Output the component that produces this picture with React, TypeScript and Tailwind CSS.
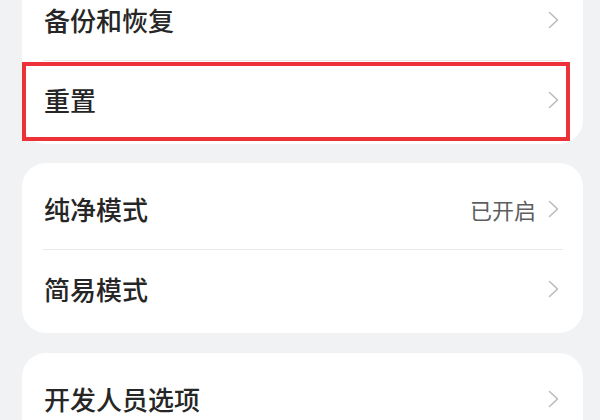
const FONT = 'font-["Noto_Sans_CJK_SC","Noto_Sans",sans-serif]';

function Chevron() {
  return (
    <svg width="11" height="18" viewBox="0 0 11 18" fill="none" className="shrink-0">
      <path d="M1.5 1.5 L9.5 9 L1.5 16.5" stroke="#bcbcbc" strokeWidth="1.6" strokeLinecap="round" strokeLinejoin="round" />
    </svg>
  );
}

interface RowProps {
  label: string;
  value?: string;
  divider?: boolean;
  highlight?: boolean;
}

function Row({ label, value, divider, highlight }: RowProps) {
  return (
    <div className="relative">
      {divider && <div className="absolute top-0 left-[21px] right-[20px] h-px bg-[#e8e8ea]" />}
      <div className="h-[80px] flex items-center justify-between pl-[22px] pr-[24px]">
        <span className="text-[26px] font-medium text-[#262626] leading-none">{label}</span>
        <div className="flex items-center gap-[12px]">
          {value && <span className="text-[22px] text-[#5e5e5e] leading-none">{value}</span>}
          <Chevron />
        </div>
      </div>
      {highlight && (
        <div className="absolute top-[2px] bottom-[-1px] left-0 right-[13px] border-[4px] border-[#ec3237] pointer-events-none" />
      )}
    </div>
  );
}

export default function App() {
  return (
    <div className={`${FONT} w-[600px] h-[420px] overflow-hidden bg-[#f1f2f4]`}>
      <div className="flex flex-col gap-[19px] pl-[22px] pr-[17px] mt-[-26px]">
        <div className="bg-white rounded-[24px] pt-[6px] pb-[4px]">
          <Row label="备份和恢复" />
          <Row label="重置" divider highlight />
        </div>
        <div className="bg-white rounded-[24px] pt-[6px] pb-[4px]">
          <Row label="纯净模式" value="已开启" />
          <Row label="简易模式" divider />
        </div>
        <div className="bg-white rounded-[24px] pt-[6px] pb-[4px] mt-[1px]">
          <Row label="开发人员选项" />
        </div>
      </div>
    </div>
  );
}
